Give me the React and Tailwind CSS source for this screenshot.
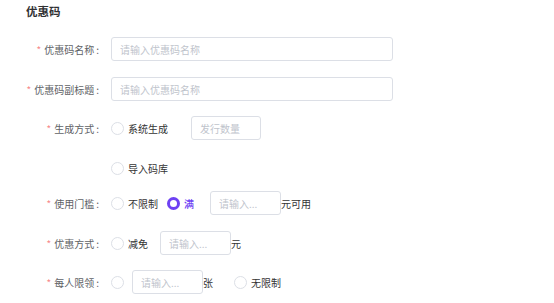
import React from 'react';

const font = { fontFamily: '"Noto Sans CJK SC", "Noto Sans", sans-serif' };

function Label({ children, className = '' }) {
  return (
    <div className={`w-[111px] shrink-0 pr-[12px] text-right text-[10px] text-[#606266] ${className}`}>
      <span className="mr-[3px] text-[#f78989]">*</span>
      {children}
      <span className="ml-[2px]">:</span>
    </div>
  );
}

function Radio({ checked }) {
  return checked ? (
    <span className="box-border inline-block h-[13px] w-[13px] shrink-0 rounded-full border-[3.5px] border-[#6e41f3] bg-white" />
  ) : (
    <span className="box-border inline-block h-[13px] w-[13px] shrink-0 rounded-full border border-[#dcdfe6] bg-white" />
  );
}

function Input({ placeholder, className = 'w-[71px]' }) {
  return (
    <input
      readOnly
      placeholder={placeholder}
      className={`box-border h-[24px] shrink-0 rounded-[3px] border border-[#dcdfe6] bg-white pl-[8px] text-[10px] outline-none placeholder:text-[#c0c4cc] ${className}`}
      style={font}
    />
  );
}

export default function App() {
  return (
    <div className="h-[303px] w-[554px] bg-white text-[#303133]" style={font}>
      <div className="flex h-[24px] items-center pl-[26px] text-[11.5px] font-bold text-[#303133]">优惠码</div>

      <div className="mt-[13px] flex h-[24px] items-center">
        <Label>优惠码名称</Label>
        <Input placeholder="请输入优惠码名称" className="w-[282px]" />
      </div>

      <div className="mt-[16px] flex h-[24px] items-center">
        <Label>优惠码副标题</Label>
        <Input placeholder="请输入优惠码名称" className="w-[282px]" />
      </div>

      <div className="mt-[15px] flex h-[24px] items-center">
        <Label>生成方式</Label>
        <Radio />
        <span className="ml-[4px] text-[10px] text-[#333]">系统生成</span>
        <Input placeholder="发行数量" className="ml-[23px] w-[70px]" />
      </div>

      <div className="mt-[16px] flex h-[24px] items-center pl-[111px]">
        <Radio />
        <span className="ml-[4px] text-[10px] text-[#333]">导入码库</span>
      </div>

      <div className="mt-[11px] flex h-[24px] items-center">
        <Label>使用门槛</Label>
        <Radio />
        <span className="ml-[4px] text-[10px] text-[#333]">不限制</span>
        <span className="ml-[9px] flex items-center">
          <Radio checked />
          <span className="ml-[4px] text-[10px] font-medium text-[#6e41f3]">满</span>
        </span>
        <Input placeholder="请输入..." className="ml-[16px] w-[71px]" />
        <span className="text-[10px] text-[#333]">元可用</span>
      </div>

      <div className="mt-[16px] flex h-[24px] items-center">
        <Label>优惠方式</Label>
        <Radio />
        <span className="ml-[4px] text-[10px] text-[#333]">减免</span>
        <Input placeholder="请输入..." className="ml-[12px] w-[71px]" />
        <span className="text-[10px] text-[#333]">元</span>
      </div>

      <div className="mt-[15px] flex h-[24px] items-center">
        <Label>每人限领</Label>
        <Radio />
        <Input placeholder="请输入..." className="ml-[8px] w-[71px]" />
        <span className="text-[10px] text-[#333]">张</span>
        <span className="ml-[21px] flex items-center">
          <Radio />
          <span className="ml-[4px] text-[10px] text-[#333]">无限制</span>
        </span>
      </div>
    </div>
  );
}
